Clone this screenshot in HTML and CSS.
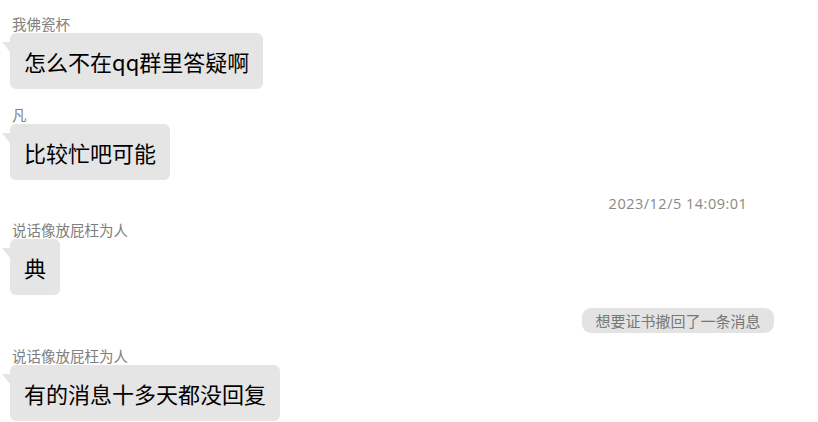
FILE: index.html
```html
<!DOCTYPE html>
<html lang="zh-CN">
<head>
  <meta charset="UTF-8">
  <title>聊天记录</title>
  <meta name="viewport" content="width=device-width, initial-scale=1.0">
  <link rel="stylesheet" href="styles.css">
</head>
<body>
  <div class="chat">
    <div class="msg">
      <div class="nick">我佛瓷杯</div>
      <div class="bubble">怎么不在qq群里答疑啊</div>
    </div>
    <div class="msg">
      <div class="nick">凡</div>
      <div class="bubble">比较忙吧可能</div>
    </div>
    <div class="sys time-row"><span class="time">2023/12/5 14:09:01</span></div>
    <div class="msg">
      <div class="nick">说话像放屁枉为人</div>
      <div class="bubble">典</div>
    </div>
    <div class="sys recall-row"><span class="recall">想要证书撤回了一条消息</span></div>
    <div class="msg">
      <div class="nick">说话像放屁枉为人</div>
      <div class="bubble">有的消息十多天都没回复</div>
    </div>
  </div>
</body>
</html>
```

FILE: styles.css
```css
:root {
  --bubble: #e5e5e5;
  --nick: #808080;
  --sys: #888;
}
* { box-sizing: border-box; margin: 0; padding: 0; }
body { background: #fff; font-family: "Noto Sans CJK SC", "Noto Sans", sans-serif; color: #000; }
.chat { display: flex; flex-direction: column; padding: 17px 0 0 10px; }
.msg { display: flex; flex-direction: column; align-items: flex-start; }
.msg + .msg { margin-top: 19px; }
.nick { font-size: 14.5px; line-height: 14px; color: var(--nick); padding: 0 0 2px 2px; white-space: nowrap; }
.bubble { position: relative; background: var(--bubble); border-radius: 6px; padding: 13px 14px; font-size: 22px; line-height: 30px; white-space: nowrap; }
.bubble::before { content: ""; position: absolute; left: -8px; top: 9px; width: 0; height: 0; border-top: 10px solid var(--bubble); border-left: 8px solid transparent; }
.sys { display: flex; justify-content: center; padding-left: 528px; }
.time-row { margin: 14px 0 9px; }
.time { font-family: "Open Sans", "Noto Sans CJK SC", sans-serif; font-size: 14.5px; letter-spacing: 0.5px; line-height: 20px; color: var(--sys); }
.recall-row { margin: 13px 0 16px; }
.recall { background: #e3e3e3; border-radius: 9px; padding: 0 13px; font-size: 15px; line-height: 25px; color: #777; }
```
